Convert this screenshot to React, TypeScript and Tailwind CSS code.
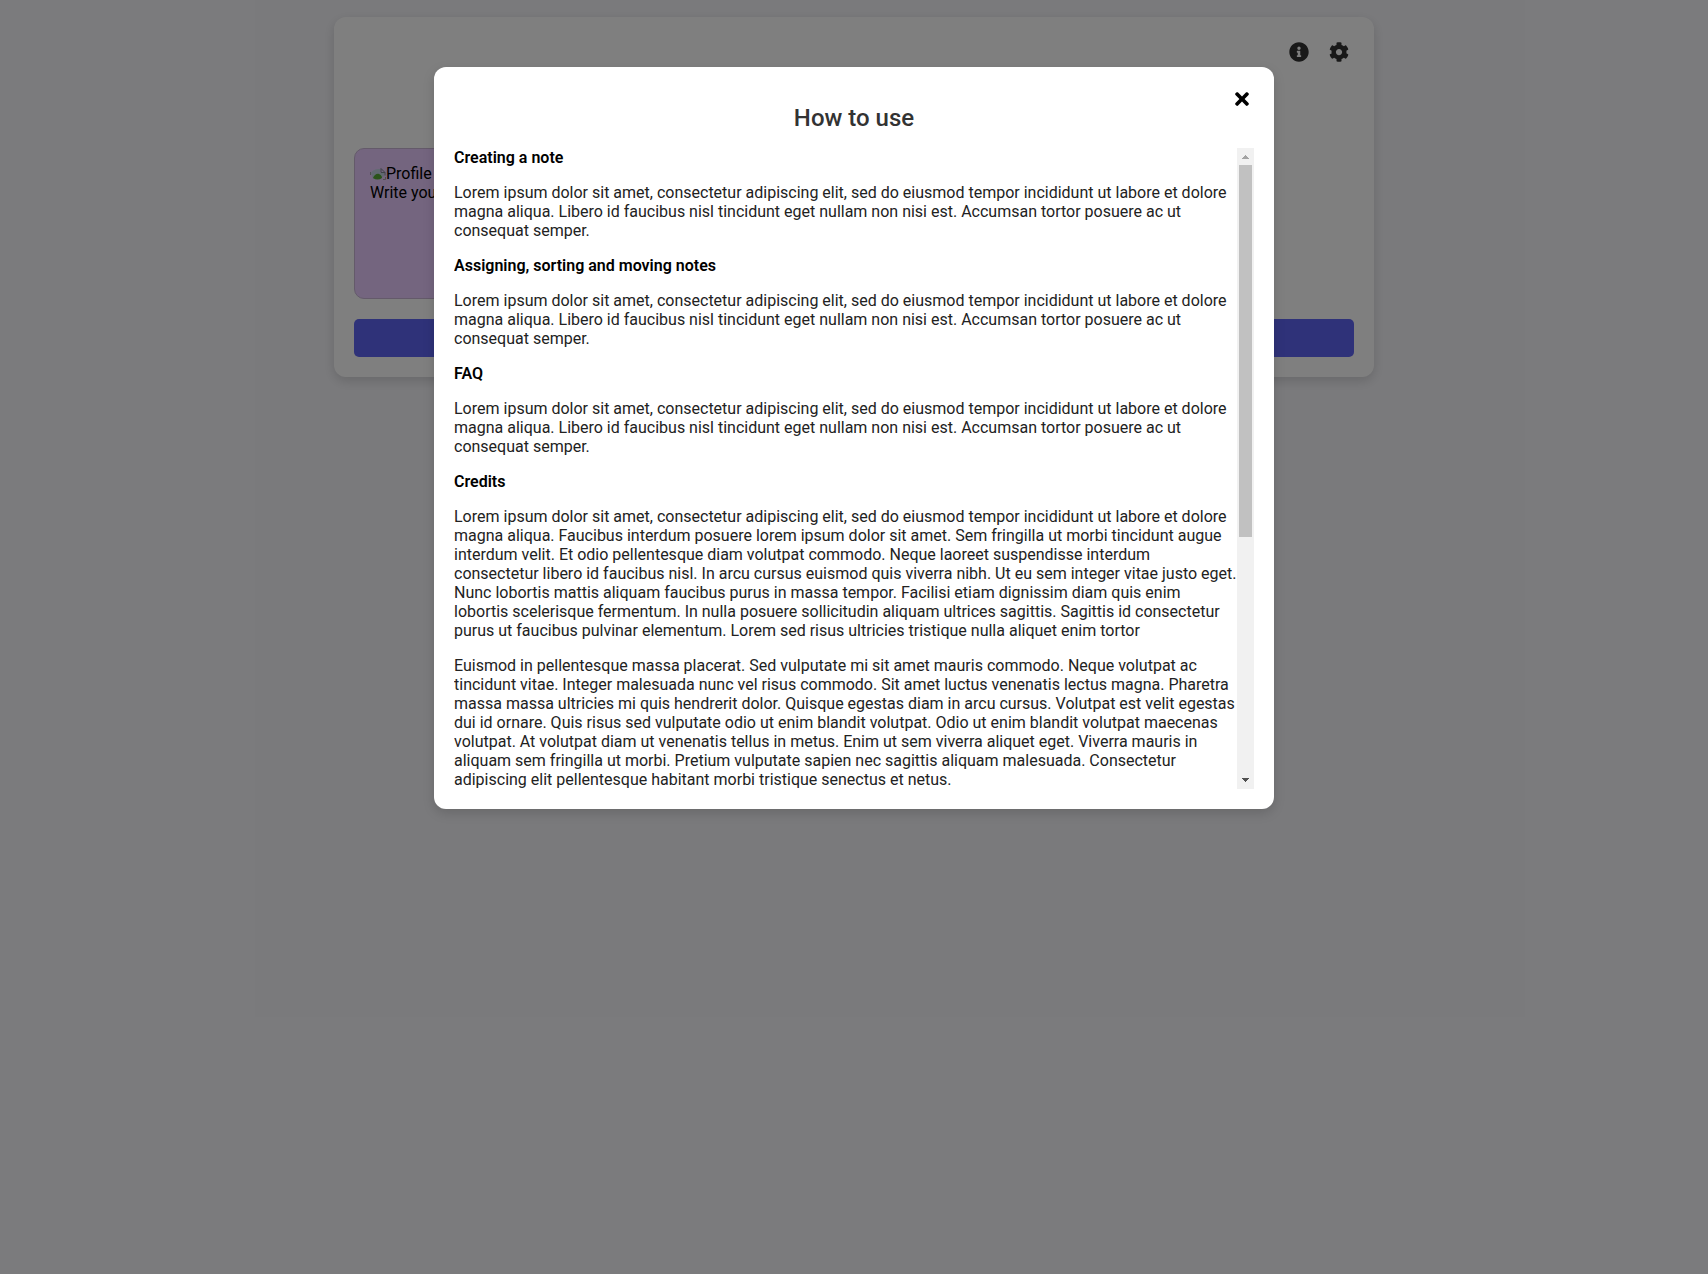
import React from "react";
import { FaInfoCircle, FaCog, FaTimes } from "react-icons/fa";

const SHORT = [
  "Lorem ipsum dolor sit amet, consectetur adipiscing elit, sed do eiusmod tempor incididunt ut labore et dolore",
  "magna aliqua. Libero id faucibus nisl tincidunt eget nullam non nisi est. Accumsan tortor posuere ac ut",
  "consequat semper.",
];

const CREDITS = [
  "Lorem ipsum dolor sit amet, consectetur adipiscing elit, sed do eiusmod tempor incididunt ut labore et dolore",
  "magna aliqua. Faucibus interdum posuere lorem ipsum dolor sit amet. Sem fringilla ut morbi tincidunt augue",
  "interdum velit. Et odio pellentesque diam volutpat commodo. Neque laoreet suspendisse interdum",
  "consectetur libero id faucibus nisl. In arcu cursus euismod quis viverra nibh. Ut eu sem integer vitae justo eget.",
  "Nunc lobortis mattis aliquam faucibus purus in massa tempor. Facilisi etiam dignissim diam quis enim",
  "lobortis scelerisque fermentum. In nulla posuere sollicitudin aliquam ultrices sagittis. Sagittis id consectetur",
  "purus ut faucibus pulvinar elementum. Lorem sed risus ultricies tristique nulla aliquet enim tortor",
];

const MORE = [
  "Euismod in pellentesque massa placerat. Sed vulputate mi sit amet mauris commodo. Neque volutpat ac",
  "tincidunt vitae. Integer malesuada nunc vel risus commodo. Sit amet luctus venenatis lectus magna. Pharetra",
  "massa massa ultricies mi quis hendrerit dolor. Quisque egestas diam in arcu cursus. Volutpat est velit egestas",
  "dui id ornare. Quis risus sed vulputate odio ut enim blandit volutpat. Odio ut enim blandit volutpat maecenas",
  "volutpat. At volutpat diam ut venenatis tellus in metus. Enim ut sem viverra aliquet eget. Viverra mauris in",
  "aliquam sem fringilla ut morbi. Pretium vulputate sapien nec sagittis aliquam malesuada. Consectetur",
  "adipiscing elit pellentesque habitant morbi tristique senectus et netus.",
];

function Paragraph({ lines }: { lines: string[] }) {
  return (
    <p className="font-normal text-[#222222]">
      {lines.map((line) => (
        <span key={line} className="block whitespace-nowrap">
          {line}
        </span>
      ))}
    </p>
  );
}

function Heading({ children }: { children: React.ReactNode }) {
  return <h3 className="font-semibold text-black">{children}</h3>;
}

function Scrollbar() {
  return (
    <div className="flex w-[17px] shrink-0 flex-col items-center bg-[#f1f1f1]">
      <svg className="h-[17px] w-[17px] shrink-0" viewBox="0 0 17 17" shapeRendering="crispEdges">
        <path d="M5 11h7v-1h-1v-1h-1v-1h-1v-1h-1v1h-1v1h-1v1h-1z" fill="#a3a3a3" />
      </svg>
      <div className="h-[372px] w-[13px] bg-[#c1c1c1]" />
      <svg className="mt-auto h-[17px] w-[17px] shrink-0" viewBox="0 0 17 17" shapeRendering="crispEdges">
        <path d="M5 6h7v1h-1v1h-1v1h-1v1h-1v-1h-1v-1h-1v-1h-1z" fill="#505050" />
      </svg>
    </div>
  );
}

function BrokenImage() {
  return (
    <svg className="h-4 w-4 shrink-0" viewBox="0 0 16 16">
      <path d="M1 7c2-3 4-4 9-4v4h4v3l-4 3H3z" fill="#c2d3e2" />
      <path d="M0.5 6v3M13 13.5h2.5V11" stroke="#a0a0a0" fill="none" />
      <path d="M3 12c1-3 4-5 6-4 2 1 3 2 3 4-3 2-6 2-9 0z" fill="#54a834" />
      <path d="M11 2.500l4 4v3M11 2.500v4h4" fill="none" stroke="#7d8790" />
    </svg>
  );
}

function NotesPanel() {
  return (
    <main className="mx-auto flex h-[360px] w-[1040px] flex-col rounded-xl bg-white p-5 shadow-[0_4px_12px_rgba(0,0,0,0.15)]">
      <div className="flex h-[111px] justify-end gap-5 pt-[5px] pr-[5px] text-xl text-[#333333]">
        <FaInfoCircle />
        <FaCog />
      </div>
      <div className="h-[151px] w-[235px] rounded-[10px] border border-[#c8b5d5] bg-[#e8cbfe] px-[15px] py-[15px] leading-[19px] text-black">
        <div className="flex items-center">
          <BrokenImage />
          Profile
        </div>
        <div className="whitespace-nowrap">Write you</div>
      </div>
      <div className="mt-5 h-[38px] rounded-[5px] bg-[#5e64f2]" />
    </main>
  );
}

export default function App() {
  return (
    <div className="relative h-[1274px] overflow-hidden bg-[#f5f5f9] pt-[17px] font-['Roboto',sans-serif] text-base">
      <NotesPanel />
      <div className="absolute inset-0 bg-black/50 pt-[67px]">
        <section className="relative mx-auto flex h-[742px] w-[840px] flex-col rounded-xl bg-white p-5 shadow-[0_4px_12px_rgba(0,0,0,0.15)]">
          <button className="absolute top-[22px] right-[22px] text-xl text-black" aria-label="Close">
            <FaTimes />
          </button>
          <h2 className="h-[61px] pt-[17px] text-center text-2xl leading-[28px] font-medium text-[#333333]">How to use</h2>
          <div className="flex h-[641px]">
            <div className="flex w-[783px] flex-col gap-4 overflow-hidden leading-[19px]">
              <Heading>Creating a note</Heading>
              <Paragraph lines={SHORT} />
              <Heading>Assigning, sorting and moving notes</Heading>
              <Paragraph lines={SHORT} />
              <Heading>FAQ</Heading>
              <Paragraph lines={SHORT} />
              <Heading>Credits</Heading>
              <Paragraph lines={CREDITS} />
              <Paragraph lines={MORE} />
            </div>
            <Scrollbar />
          </div>
        </section>
      </div>
    </div>
  );
}
